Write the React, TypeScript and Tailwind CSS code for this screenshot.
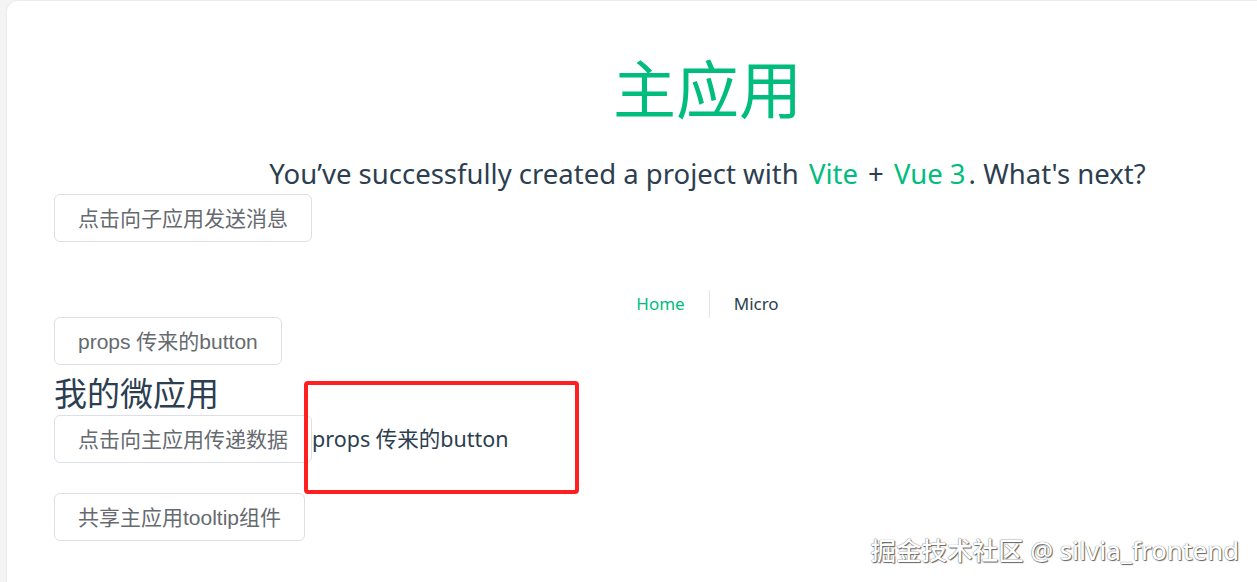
const sans = "font-['Noto_Sans','Noto_Sans_CJK_SC',sans-serif]";
const btnFont = "font-['Liberation_Sans','Noto_Sans_CJK_SC',sans-serif]";

function Btn({ children }: { children: React.ReactNode }) {
  return (
    <button
      className={`${btnFont} h-[48px] px-[23px] rounded-[6px] border border-[#dcdfe6] bg-white text-[21px] leading-none text-[#666a70]`}
    >
      {children}
    </button>
  );
}

export default function App() {
  return (
    <div className={`${sans} flex h-[582px] bg-[#f4f4f4] pl-[6px] overflow-hidden`}>
      <div className="relative flex-1 bg-white rounded-tl-[12px] border-l border-t border-[#ececec] pl-[47px] text-[#2c3e50]">
        {/* header */}
        <div className="pl-[104px] text-center">
          <h1 className="pt-[52px] text-[63px] leading-[72px] font-normal text-[#00bd7e]">主应用</h1>
          <h3 className="mt-[32px] text-[27.5px] leading-[34px]">
            You’ve successfully created a project with{" "}
            <span className="px-[3px] text-[#00bd7e]">Vite</span> +{" "}
            <span className="px-[3px] text-[#00bd7e]">Vue 3</span>. What's next?
          </h3>
        </div>

        <div className="mt-[3px]">
          <Btn>点击向子应用发送消息</Btn>
        </div>

        {/* nav */}
        <nav className="pl-[104px] mt-[48px] flex justify-center text-[17px] leading-[28px]">
          <a className="px-[24px] text-[#00bd7e]">Home</a>
          <a className="px-[24px] border-l border-[#e5e5e5] text-[#2c3e50]">Micro</a>
        </nav>

        <div className="mt-[-1px]">
          <Btn>props 传来的button</Btn>
        </div>

        <h2 className="mt-[8px] text-[33px] leading-[42px] font-normal">我的微应用</h2>

        <div className="flex items-center">
          <Btn>点击向主应用传递数据</Btn>
          <span className="text-[21.5px]">props 传来的button</span>
        </div>

        <div className="mt-[30px]">
          <Btn>共享主应用tooltip组件</Btn>
        </div>

        {/* annotation box */}
        <div className="absolute left-[297px] top-[380px] w-[275px] h-[113px] border-[4px] border-[#ff1f1f] rounded-[4px]" />

        {/* watermark */}
        <div className="absolute right-[18px] bottom-[19px] text-[25.5px] leading-none font-medium text-white [text-shadow:0_0_1px_#444,1px_1px_1px_#666]">
          掘金技术社区 @ silvia_frontend
        </div>
      </div>
    </div>
  );
}
